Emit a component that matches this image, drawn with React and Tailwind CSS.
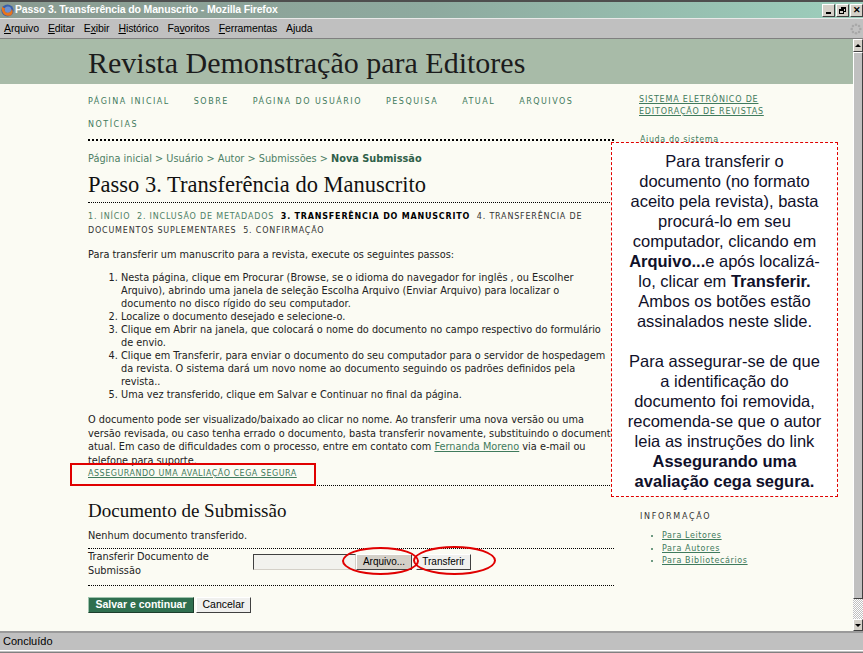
import React from 'react';

const navItems = ['PÁGINA INICIAL', 'SOBRE', 'PÁGINA DO USUÁRIO', 'PESQUISA', 'ATUAL', 'ARQUIVOS', 'NOTÍCIAS'];

const menuItems = [
  ['Arquivo', 0],
  ['Editar', 0],
  ['Exibir', 1],
  ['Histórico', 0],
  ['Favoritos', 2],
  ['Ferramentas', 0],
  ['Ajuda', 1],
];

const FirefoxIcon = () => (
  <svg width="13" height="13" viewBox="0 0 16 16">
    <circle cx="8" cy="8" r="7.5" fill="#3a5fa8" />
    <circle cx="8.5" cy="7" r="4" fill="#6c8fd0" />
    <path d="M1 6 C1 13 8 16 12 14 C15 12 15 8 13 6 C13 10 9 12 6 10 C4 9 4 7 5 5 C3 5 2 4 2 3 C1 4 1 5 1 6 Z" fill="#e8731c" />
  </svg>
);

const WinButton = ({ children }) => (
  <div className="w-[13px] h-[13px] bg-[#d4d0c8] border border-t-white border-l-white border-r-[#404040] border-b-[#404040] flex items-center justify-center text-[9px] leading-none font-bold text-black">
    {children}
  </div>
);

const Throbber = () => (
  <svg width="12" height="12" viewBox="0 0 12 12">
    {[0, 45, 90, 135, 180, 225, 270, 315].map((a) => {
      const r = (a * Math.PI) / 180;
      return <circle key={a} cx={6 + 4.3 * Math.cos(r)} cy={6 + 4.3 * Math.sin(r)} r="1.3" fill="#a8a8a8" />;
    })}
  </svg>
);

const Dotted = ({ className = '' }) => <div className={`border-b border-dotted border-black ${className}`} />;

export default function App() {
  return (
    <div className="relative w-[863px] h-[653px] overflow-hidden flex flex-col bg-[#c0c0c0] font-['Liberation_Sans',Arial,sans-serif]">
      {/* title bar */}
      <div className="h-[18px] border-t-2 border-[#4e4e4e] bg-gradient-to-r from-[#8a9b91] via-[#8eaa9f] to-[#9dcfbd] flex items-center">
        <div className="pl-[1px] pr-[1px]"><FirefoxIcon /></div>
        <span className="text-white font-bold text-[10.5px] tracking-[-0.15px]">Passo 3. Transferência do Manuscrito - Mozilla Firefox</span>
        <div className="ml-auto flex gap-[1px]">
          <WinButton><span className="block w-[5px] h-[2px] bg-black mt-[5px]" /></WinButton>
          <WinButton>
            <span className="relative block w-[7px] h-[7px]">
              <span className="absolute right-0 top-0 w-[5px] h-[5px] border border-black border-t-2" />
              <span className="absolute left-0 bottom-0 w-[5px] h-[5px] border border-black border-t-2 bg-[#d4d0c8]" />
            </span>
          </WinButton>
          <WinButton>✕</WinButton>
        </div>
      </div>

      {/* menu bar */}
      <div className="h-[21px] border-t border-[#e8e8e8] border-b border-b-[#808080] flex items-center pl-[4px] text-[10.5px] tracking-[-0.1px] text-black">
        {menuItems.map(([word, idx]) => (
          <span key={word} className="mr-[9px]">
            {word.slice(0, idx)}
            <span className="underline">{word[idx]}</span>
            {word.slice(idx + 1)}
          </span>
        ))}
        <div className="ml-auto mr-[1px]"><Throbber /></div>
      </div>

      {/* content */}
      <div className="flex-1 flex min-h-0">
        <div className="w-[853px] flex flex-col bg-[#fbfbf3]">
          <div className="h-[45px] bg-[#a8bba8] pl-[88px] flex items-center">
            <h1 className="font-['Liberation_Serif',serif] text-[30px] text-[#1c1c1c] leading-none mt-[2px]">Revista Demonstração para Editores</h1>
          </div>

          <div className="flex-1 flex font-['DejaVu_Sans',Verdana,sans-serif] text-[9.75px] text-[#222]">
            {/* main column */}
            <div className="ml-[88px] w-[526px] pt-[6px]">
              <nav className="flex flex-wrap gap-x-[24px] text-[8px] tracking-[1.5px] leading-[23px] text-[#3f7a5c]">
                {navItems.map((n) => <span key={n}>{n}</span>)}
              </nav>
              <div className="mt-[3px] border-b-2 border-dotted border-black" />

              <div className="mt-[11px] leading-[13px] text-[#4d8065]">
                Página inicial &gt; Usuário &gt; Autor &gt; Submissões &gt; <b className="text-[#2f6049]">Nova Submissão</b>
              </div>

              <h2 className="mt-[7px] font-['Liberation_Serif',serif] text-[22.5px] leading-[25px] text-[#111]">Passo 3. Transferência do Manuscrito</h2>
              <Dotted className="mt-[5px]" />

              <p className="mt-[7px] text-[8px] tracking-[0.8px] leading-[14px] whitespace-nowrap">
                <span className="text-[#4d8065]">1. INÍCIO&nbsp; 2. INCLUSÃO DE METADADOS</span>
                {'\u00a0 '}
                <b className="text-black">3. TRANSFERÊNCIA DO MANUSCRITO</b>
                {'\u00a0 '}
                <span className="text-[#333]">4. TRANSFERÊNCIA DE</span>
                <br />
                <span className="text-[#333]">DOCUMENTOS SUPLEMENTARES&nbsp; 5. CONFIRMAÇÃO</span>
              </p>

              <p className="mt-[10px] leading-[13px]">Para transferir um manuscrito para a revista, execute os seguintes passos:</p>

              <ol className="mt-[10px] list-decimal pl-[33px] leading-[13px]">
                <li>Nesta página, clique em Procurar (Browse, se o idioma do navegador for inglês , ou Escolher<br />Arquivo), abrindo uma janela de seleção Escolha Arquivo (Enviar Arquivo) para localizar o<br />documento no disco rígido do seu computador.</li>
                <li>Localize o documento desejado e selecione-o.</li>
                <li>Clique em Abrir na janela, que colocará o nome do documento no campo respectivo do formulário<br />de envio.</li>
                <li>Clique em Transferir, para enviar o documento do seu computador para o servidor de hospedagem<br />da revista. O sistema dará um novo nome ao documento seguindo os padrões definidos pela<br />revista..</li>
                <li>Uma vez transferido, clique em Salvar e Continuar no final da página.</li>
              </ol>

              <p className="mt-[12px] leading-[13.5px] whitespace-nowrap">
                O documento pode ser visualizado/baixado ao clicar no nome. Ao transferir uma nova versão ou uma<br />
                versão revisada, ou caso tenha errado o documento, basta transferir novamente, substituindo o documento<br />
                atual. Em caso de dificuldades com o processo, entre em contato com <span className="text-[#3f7a5c] underline">Fernanda Moreno</span> via e-mail ou<br />
                telefone para suporte.
              </p>
              <p className="leading-[13.5px] text-[8px] tracking-[0.5px] text-[#3f7a5c] underline">ASSEGURANDO UMA AVALIAÇÃO CEGA SEGURA</p>
              <Dotted className="mt-[4px]" />

              <h3 className="mt-[14px] font-['Liberation_Serif',serif] text-[19px] leading-[22px] text-[#111]">Documento de Submissão</h3>
              <p className="mt-[7px] leading-[13px]">Nenhum documento transferido.</p>
              <Dotted className="mt-[6px] border-[#555]" />

              <div className="flex items-start leading-[14px] pt-[1px]">
                <div className="w-[165px]">Transferir Documento de<br />Submissão</div>
                <div className="flex items-center mt-[4px] font-['Liberation_Sans',Arial,sans-serif] text-[10px] text-black">
                  <div className="w-[103px] h-[16px] bg-[#f2f2ee] border border-t-[#404040] border-l-[#404040] border-r-[#d4d0c8] border-b-[#d4d0c8]" />
                  <div className="w-[56px] h-[16px] bg-[#d4d0c8] border border-t-white border-l-white border-r-[#404040] border-b-[#404040] flex items-center justify-center">Arquivo...</div>
                  <div className="ml-[4px] w-[55px] h-[16px] bg-[#f0f0ee] border border-t-white border-l-white border-r-[#404040] border-b-[#404040] flex items-center justify-center">Transferir</div>
                </div>
              </div>
              <Dotted className="mt-[7px]" />

              <div className="mt-[11px] flex gap-[2px] font-['Liberation_Sans',Arial,sans-serif]">
                <div className="w-[106px] h-[16px] bg-[#2f6f4f] border border-t-[#9fc3ad] border-l-[#9fc3ad] border-r-[#1c3d2c] border-b-[#1c3d2c] text-white font-bold text-[10.5px] flex items-center justify-center">Salvar e continuar</div>
                <div className="w-[55px] h-[16px] bg-[#f0f0ee] border border-t-white border-l-white border-r-[#404040] border-b-[#404040] text-black text-[10.5px] flex items-center justify-center">Cancelar</div>
              </div>
            </div>

            {/* sidebar */}
            <div className="ml-[25px] w-[180px] pt-[10px]">
              <div className="text-[8px] tracking-[0.8px] leading-[12px] text-[#3f7a5c] underline">SISTEMA ELETRÔNICO DE<br />EDITORAÇÃO DE REVISTAS</div>
              <div className="mt-[16px] text-[8px] tracking-[0.6px] text-[#3f7a5c] pl-[1px]">Ajuda do sistema</div>
              <div className="mt-[365px] pl-[1px] text-[8px] tracking-[1.7px] text-[#333]">INFORMAÇÃO</div>
              <ul className="mt-[7px] pl-[23px] list-disc text-[8px] tracking-[0.6px] leading-[12.5px] text-[#3f7a5c]">
                <li className="underline">Para Leitores</li>
                <li className="underline">Para Autores</li>
                <li className="underline">Para Bibliotecários</li>
              </ul>
            </div>
          </div>
        </div>

        {/* scrollbar */}
        <div className="w-[10px] flex flex-col bg-[#e4e4e4]">
          <div className="h-[13px] bg-[#d4d0c8] border border-t-white border-l-white border-r-[#404040] border-b-[#404040] flex items-center justify-center">
            <span className="block w-0 h-0 border-l-[3px] border-r-[3px] border-b-[3px] border-l-transparent border-r-transparent border-b-black" />
          </div>
          <div className="flex-1 bg-[#c0c0c0] border border-t-white border-l-white border-r-[#404040] border-b-[#404040]" />
          <div className="h-[20px] bg-[repeating-conic-gradient(#c0c0c0_0_25%,#ffffff_0_50%)] bg-[length:2px_2px]" />
          <div className="h-[12px] bg-[#d4d0c8] border border-t-white border-l-white border-r-[#404040] border-b-[#404040] flex items-center justify-center">
            <span className="block w-0 h-0 border-l-[3px] border-r-[3px] border-t-[3px] border-l-transparent border-r-transparent border-t-black" />
          </div>
        </div>
      </div>

      {/* status bar */}
      <div className="h-[22px] border-t-2 border-[#9a9a9a] flex flex-col">
        <div className="flex-1 flex items-center pl-[3px] text-[11px] text-black">Concluído</div>
        <div className="h-[3px] border-t border-white border-b border-b-[#808080]" />
      </div>

      {/* annotations */}
      <div className="absolute left-[70px] top-[463px] w-[246px] h-[23px] border-2 border-[#e00000]" />
      <div className="absolute left-[342px] top-[547px] w-[77px] h-[28px] border-2 border-[#e00000] rounded-[50%]" />
      <div className="absolute left-[413px] top-[546px] w-[83px] h-[29px] border-2 border-[#e00000] rounded-[50%]" />

      <div className="absolute left-[611px] top-[142px] w-[227px] h-[355px] bg-white border border-dashed border-[#e00000] pt-[8px] text-center text-[16.5px] leading-[20px] text-[#10102a] font-['Liberation_Sans',Arial,sans-serif]">
        Para transferir o<br />
        documento (no formato<br />
        aceito pela revista), basta<br />
        procurá-lo em seu<br />
        computador, clicando em<br />
        <b>Arquivo...</b>e após localizá-<br />
        lo, clicar em <b>Transferir.</b><br />
        Ambos os botões estão<br />
        assinalados neste slide.<br />
        <br />
        Para assegurar-se de que<br />
        a identificação do<br />
        documento foi removida,<br />
        recomenda-se que o autor<br />
        leia as instruções do link<br />
        <b>Assegurando uma</b><br />
        <b>avaliação cega segura.</b>
      </div>
    </div>
  );
}
